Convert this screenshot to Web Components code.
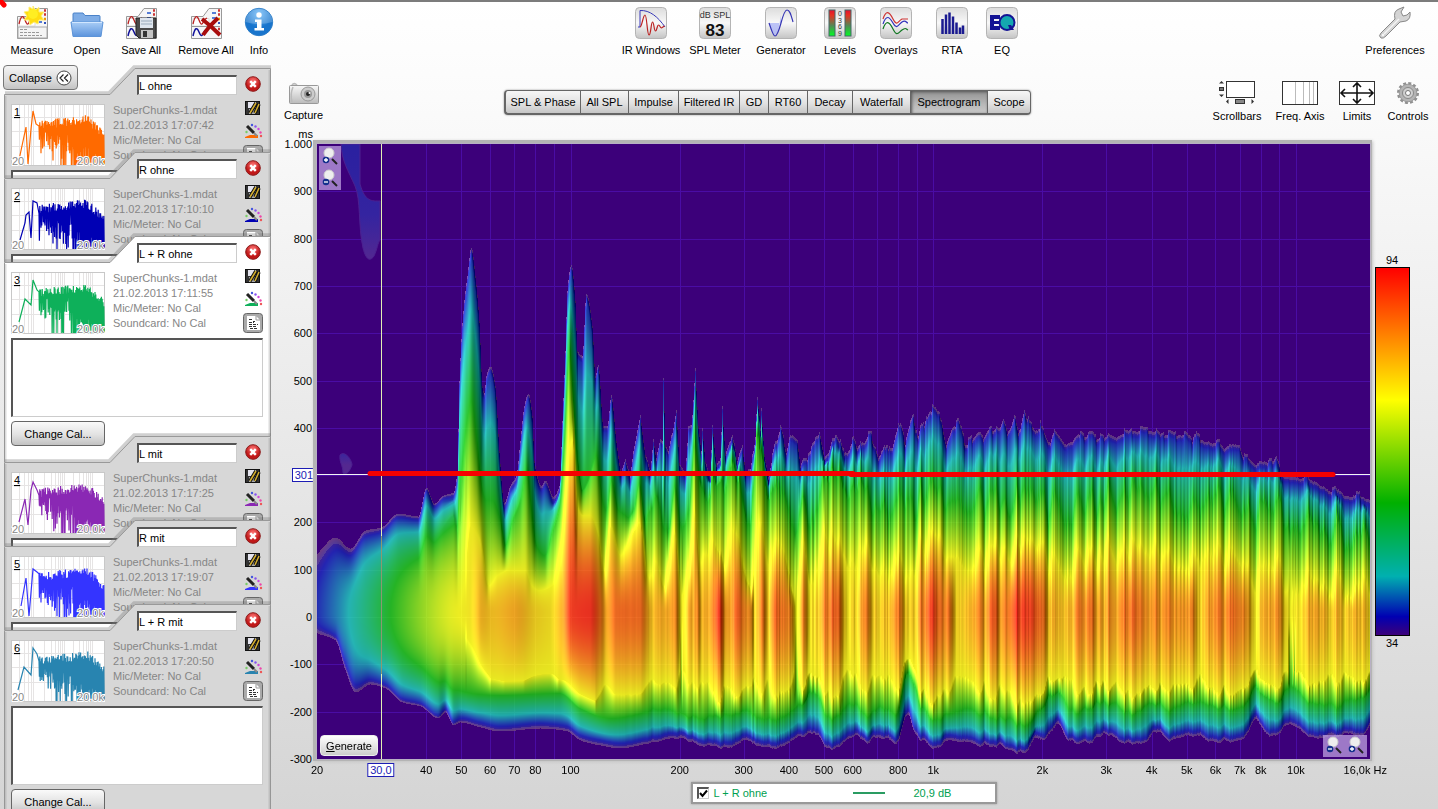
<!DOCTYPE html>
<html lang="en">
<head>
<meta charset="utf-8">
<title>Room acoustics measurement</title>
<style>
html, body { margin: 0; height: 100%; }
body { font: 11px/14px "Liberation Sans", Arial, sans-serif; color: #000; overflow: hidden; }
</style>
</head>
<body>
<acoustics-app></acoustics-app>
<script>
const define = (name, html, ready) => {
  const tpl = document.createElement('template');
  tpl.innerHTML = html;
  customElements.define(name, class extends HTMLElement {
    constructor() {
      super();
      this.attachShadow({ mode: 'open' }).appendChild(tpl.content.cloneNode(true));
    }
    connectedCallback() { if (ready && !this.done) { this.done = true; ready(this, this.shadowRoot); } }
  });
};

/* ---------- icons ---------- */
const tile = `<defs><linearGradient id="t" x2="0" y2="1"><stop stop-color="#dcdcdc"/><stop offset=".5" stop-color="#f8f8f8"/><stop offset="1" stop-color="#c4c4c4"/></linearGradient></defs><rect x=".5" y=".5" width="31" height="31" rx="4" fill="url(#t)" stroke="#b4b4b4"/>`;
const sheet = `<path d="M1.5 9.5L13 9.5 19 1.5H31.500V31.500H1.500Z" fill="#f6f6f6" stroke="#999"/><path d="M3 11.500H19V19H3Z" fill="#fff" stroke="#ddd"/><path d="M3 17C5 8 7 8 9 13S12 19 14 13L17 11" fill="none" stroke="#b22" stroke-width="1.300"/><path d="M22 6h4M22 11h4M22 15h4" stroke="#25c" stroke-width="1.500"/><path d="M28 3.500h2M28 7.500h2" stroke="#c33" stroke-width="2.500"/><path d="M28 12h2" stroke="#e90" stroke-width="2.500"/><path d="M28 16h2" stroke="#35b" stroke-width="2"/>`;
const sheet2 = sheet + `<path d="M2 19.500H30" stroke="#999"/><path d="M3 29C5 20 7 20 9 25S12 30 15 23" fill="none" stroke="#119" stroke-width="1.500"/><path d="M28 22h2M28 27h2" stroke="#c33" stroke-width="2.500"/>`;
const icons = {
  measure: sheet + `<rect x="2" y="20" width="29" height="11" fill="#f4f4f4" stroke="#aaa"/><path d="M4 22.500h8M4 25.500h20M4 28.500h22" stroke="#999" stroke-dasharray="3 1"/><path d="M17 -1l2 4 4-2.500 0 4.500 5 0-3 4 3 4-5 0-1 4-4-2-4 3-1-5-5 0 3-4-3-4 5-1 0-4 4 2z" fill="#fd1" stroke="#fe7"/><circle cx="17" cy="7" r="5" fill="#fe2"/>`,
  open: `<defs><linearGradient id="o" x2="0" y2="1"><stop stop-color="#a9cdf6"/><stop offset="1" stop-color="#5c94dc"/></linearGradient></defs><path d="M2 16V7q0-1 1-1h9l2 2.500h14q1 0 1 1V16z" fill="#7fadE6" stroke="#4a82c8"/><path d="M0 15H32L30 29.500H2Z" fill="url(#o)" stroke="#5d94d8"/><path d="M1 15.500H31" stroke="#d0e6ff"/>`,
  saveall: sheet2 + `<path d="M11 11h20v20H14l-3-3z" fill="#4a4a4a" stroke="#222"/><rect x="15" y="11" width="13" height="10" fill="#dfe6ee"/><rect x="16" y="23" width="12" height="8" fill="#c4c4c4"/><rect x="18" y="24" width="4" height="6" fill="#333"/><path d="M16 14h11M16 17h11" stroke="#9ab"/>`,
  removeall: sheet2 + `<path d="M12 12q9 7 18 16M28 11q-9 8-15 17" fill="none" stroke="#a80c0c" stroke-width="4"/>`,
  info: `<defs><radialGradient id="i" cy=".2"><stop stop-color="#6ab8f8"/><stop offset="1" stop-color="#1874cc"/></radialGradient></defs><circle cx="16" cy="15" r="13.700" fill="url(#i)" stroke="#2a7cc8"/><path d="M2.500 15Q16 19 29.500 15A13.500 13.500 0 0 0 2.500 15" fill="#fff" opacity=".22"/><circle cx="16" cy="8" r="2.700" fill="#fff"/><path d="M12 12.500h6.500v8.500h2.500v2.500H11.500V21H14v-6H12z" fill="#fff"/>`,
  ir: tile + `<path d="M3 20h2V3.500C15 3 23 10 30 20" fill="none" stroke="#3838b8"/><path d="M5 20C7 20 8 8 10 8c2 0 2 20 4 20s2-13 3.500-13 1.500 9 3 9 1.500-6 3-6 1.500 3 3 3l3-2" fill="none" stroke="#b22" stroke-width="1.200"/>`,
  spl: tile + `<text x="16" y="11" font-size="9" text-anchor="middle" fill="#333">dB SPL</text><text x="16" y="29" font-size="17" font-weight="bold" text-anchor="middle" fill="#111">83</text>`,
  gen: tile + `<path d="M4 16h12V8l-3 17-4 4-4-8z" fill="#aeb6f8" opacity=".8"/><path d="M4 16C7 24 8 29 10 29 15 29 17 3 22 3c3 0 4 5 6 12" fill="none" stroke="#3434b4" stroke-width="1.200"/>`,
  levels: `<defs><linearGradient id="l" x2="0" y2="1"><stop stop-color="#e01030"/><stop offset=".2" stop-color="#e83020"/><stop offset=".6" stop-color="#585"/><stop offset="1" stop-color="#0f2"/></linearGradient></defs>` + tile + `<rect x="5" y="3" width="6" height="26" fill="url(#l)" stroke="#466"/><rect x="21" y="3" width="6" height="26" fill="url(#l)" stroke="#466"/><g font-size="7" text-anchor="middle" fill="#333"><text x="16" y="9">0</text><text x="16" y="16">3</text><text x="16" y="22">6</text><text x="16" y="29">9</text></g>`,
  overlays: tile + `<g fill="none" stroke-width="1.200"><path d="M3 12C6 3 9 4 13 12s5 2 9 0h6" stroke="#c33"/><path d="M3 17C6 8 9 9 13 16s5 2 9-1 4 1 6 1" stroke="#33b"/><path d="M3 22C6 13 9 14 13 22s5 4 9 1 4-1 6 0" stroke="#172"/></g>`,
  rta: tile + `<path d="M7.500 27V12M11 27V7.500M14.500 27V5.500M18 27V9.500M21.500 27V15.500M25 27V20.500M28 27V18.500" transform="translate(-1)" stroke="#1a1a90" stroke-width="2.500"/>`,
  eq: tile + `<path d="M14 8H4v15h10v-4H8v-2h5v-3H8v-2h6z" fill="#141494"/><circle cx="21" cy="15.500" r="7.500" fill="#14a8b0" stroke="#141494" stroke-width="2"/><path d="M22 18h3l3 5h-4z" fill="#141494"/>`,
  wrench: `<path d="M2 31Q-1 29 2 26L16 12Q14 4 20 2L25 0 22 5 24 9 28 8 31 5Q32 12 27 14L21 15 7 29Q4 32 2 31z" fill="#d4d4d4" stroke="#888"/><path d="M5 27L20 12" stroke="#f4f4f4" stroke-width="1.500"/><circle cx="4" cy="28" r="1" fill="#fff"/>`,
  camera: `<defs><linearGradient id="c" x2="0" y2="1"><stop stop-color="#f8f8f8"/><stop offset="1" stop-color="#bbb"/></linearGradient></defs><path d="M4 3q2-3 5 0" stroke="#bbb" fill="#ddd" stroke-width="1.500"/><rect x="1.500" y="3.500" width="29" height="18" rx="1" fill="url(#c)" stroke="#999"/><path d="M5 5q-3 7-1 15" fill="none" stroke="#bbb" stroke-width="1.500"/><circle cx="20" cy="12" r="7" fill="#ccc" stroke="#999"/><circle cx="20" cy="12" r="4" fill="#999"/><circle cx="20" cy="12" r="2" fill="#222"/><circle cx="21.500" cy="11" r="1" fill="#fff"/>`,
  scrollbars: `<rect x="8.500" y=".5" width="28" height="16" fill="#fff" stroke="#333"/><path d="M1 2.500L3.500 0 6 2.500zM1 13.500L3.500 16 6 13.500z" fill="#333"/><rect x="1.500" y="6.500" width="4" height="3" fill="#777" stroke="#333"/><path d="M10.500 18L8 20.500 10.500 23zM33.500 18L36 20.500 33.500 23z" fill="#333"/><rect x="17.500" y="18.500" width="9" height="4" fill="#888" stroke="#333"/>`,
  freqaxis: `<rect x="1.500" y=".5" width="35" height="23" fill="#fff" stroke="#333"/><path d="M14.500 1v22M22.500 1v22M28.500 1v22M32.500 1v22" stroke="#bbb"/>`,
  limits: `<rect x="1.500" y=".5" width="35" height="23" fill="#fff" stroke="#333"/><path d="M3 12H35M19 2V22M7 8L3 12 7 16M31 8L35 12 31 16M15 6L19 2 23 6M15 18L19 22 23 18" fill="none" stroke="#111" stroke-width="1.600"/>`,
  gear: `<circle cx="19" cy="12" r="9.500" fill="none" stroke="#909090" stroke-width="3" stroke-dasharray="2.900 2.070"/><circle cx="19" cy="12" r="8.800" fill="#b4b4b4" stroke="#999"/><circle cx="19" cy="12" r="5.500" fill="#d0d0d0" stroke="#888"/><circle cx="19" cy="12" r="2.500" fill="#fff" stroke="#777"/>`
};

define('tool-button', `
<style>
:host { display: block; }
button { all: unset; box-sizing: border-box; width: 100%; display: flex; flex-direction: column; align-items: center; gap: 4px; white-space: nowrap; }
svg { display: block; font-family: "Liberation Sans", Arial, sans-serif; overflow: visible; }
</style>
<button type="button"><svg aria-hidden="true"></svg><span><slot></slot></span></button>`, (el, root) => {
  const svg = root.querySelector('svg'), kind = el.getAttribute('size');
  const [w, h] = kind === 'wide' ? [38, 24] : kind === 'camera' ? [32, 22] : [32, 32];
  svg.setAttribute('width', w); svg.setAttribute('height', h); svg.setAttribute('viewBox', `0 0 ${w} ${h}`);
  svg.innerHTML = icons[el.getAttribute('icon')];
});

define('main-toolbar', `
<style>
:host { display: flex; justify-content: space-between; box-sizing: border-box; height: 65px; border-top: 2px solid #7c7c7c; padding: 5px 13px 0 4px; position: relative; }
div { display: grid; align-content: start; }
.file { grid-template-columns: 56px 54px 54px 76px 30px; padding-right: 7px; }
.tools { grid-template-columns: 60px 68px 64px 54px 58px 54px 46px; }
.prefs { grid-template-columns: 60px; }
.mark { position: absolute; left: 0; top: -2px; }
</style>
<svg class="mark" width="10" height="10" aria-hidden="true"><path d="M-2 -2L4 5" stroke="red" stroke-width="5" stroke-linecap="round"/></svg>
<div class="file">
<tool-button icon="measure">Measure</tool-button><tool-button icon="open">Open</tool-button><tool-button icon="saveall">Save All</tool-button><tool-button icon="removeall">Remove All</tool-button><tool-button icon="info">Info</tool-button>
</div>
<div class="tools">
<tool-button icon="ir">IR Windows</tool-button><tool-button icon="spl">SPL Meter</tool-button><tool-button icon="gen">Generator</tool-button><tool-button icon="levels">Levels</tool-button><tool-button icon="overlays">Overlays</tool-button><tool-button icon="rta">RTA</tool-button><tool-button icon="eq">EQ</tool-button>
</div>
<div class="prefs"><tool-button icon="wrench">Preferences</tool-button></div>`);

/* ---------- helpers ---------- */
const rng = seed => () => { seed = (seed * 1664525 + 1013904223) >>> 0; return seed / 4294967296; };
const parse = s => s.trim().split(/\s+/).map(p => p.split(',').map(Number));

/* ---------- response thumbnail ---------- */
define('response-thumb', `
<style>
:host { display: block; width: 94px; height: 62px; }
svg { display: block; width: 94px; height: 62px; font: 11px "Liberation Sans", Arial, sans-serif; }
.ax { fill: #888; stroke: #fff; stroke-width: 2px; paint-order: stroke; }
.no { text-decoration: underline; }
</style><svg viewBox="0 0 94 62"></svg>`, (el, root) => {
  const n = +el.getAttribute('number'), r = rng(n * 977 + 5);
  const starts = ['8,56 15,23 17,60 20,25 22,7 25,20', '9,52 14,35 15,27 18,24 20,50 22,13 26,15', '8,50 14,27 20,33 22,8 26,18', '8,50 14,27 17,53 20,18 22,10 26,18', '10,50 15,22 18,60 22,13 26,16', '7,50 13,27 20,35 22,8 26,14'];
  let d = 'M' + starts[n - 1];
  for (let x = 28; x < 93; x += 0.8) {
    const env = x < 76 ? 21 - (x - 28) * 0.12 : 15 + (x - 76) * 0.95;
    const top = env + (r() - 0.5) * 9;
    const deep = x < 40 ? 6 + r() * 22 : x < 61 ? (r() < 0.55 ? 12 + r() * 14 : 22 + r() * 34) : (r() < 0.3 ? 32 : 50);
    d += `L${x.toFixed(1)} ${top.toFixed(1)}L${(x + 0.4).toFixed(1)} ${Math.min(61, top + deep).toFixed(1)}`;
  }
  let g = '';
  for (const x of [8, 13, 17, 20, 22, 33, 40, 44, 47, 49, 51, 53, 62, 68, 72, 75, 77, 79, 81]) g += `M${x}.5 1V61`;
  g += 'M1 13.500H93M1 27.500H93M1 42.500H93';
  root.querySelector('svg').innerHTML = `<rect x=".5" y=".5" width="93" height="61" fill="#fff" stroke="#c8c8c8"/><path d="${g}" stroke="#e6e4e4" fill="none"/><path d="${d}" fill="none" stroke="${el.getAttribute('color')}" stroke-width="1.200"/><text class="no" x="3" y="12">${n}</text><text class="ax" x="1" y="61">20</text><text class="ax" x="93" y="61" text-anchor="end">20,0k</text>`;
});

/* ---------- measurement card ---------- */
define('measurement-card', `
<style>
:host { display: block; position: relative; height: 84px; --fill: #d7d7d7; }
:host([open]) { height: 200px; }
:host([selected]) { --fill: #fff; }
.shape { position: absolute; left: 0; top: -4px; }
.inner { position: relative; box-sizing: border-box; height: 110px; overflow: hidden; padding: 7px 0 0 7px; width: 267px; display: grid; grid-template-columns: 94px 123px 22px; grid-template-rows: 20px 9px 66px 83px 25px; column-gap: 7px; align-items: start; }
:host([open]) .inner { height: 226px; }
input { grid-area: 1 / 2; margin: 0 0 0 25px; box-sizing: border-box; width: 100px; height: 20px; font: inherit; border: solid; border-width: 2px 1px 1px 2px; border-color: #555 #ccc #ccc #555; padding: 1px 0; background: #fff; color: #000; border-radius: 0; outline: none; }
response-thumb { grid-area: 3 / 1; }
dl { grid-area: 3 / 2; margin: 0; padding-left: 1px; line-height: 15px; color: #868686; white-space: nowrap; margin-top: -1px; }
dd { margin: 0; }
.acts { grid-area: 1 / 3 / 4; display: flex; flex-direction: column; align-items: center; gap: 7px; }
.acts button { all: unset; display: block; width: 20px; height: 17px; }
.acts button.notes { height: 20px; margin-top: -2px; }
.acts svg { display: block; margin: auto; overflow: visible; }
textarea { grid-area: 4 / 1 / 5 / 4; box-sizing: border-box; width: 252px; height: 79px; resize: none; margin: 0; border: solid; border-width: 2px 1px 1px 2px; border-color: #555 #ccc #ccc #555; border-radius: 0; background: #fff; outline: none; overflow: hidden; }
.cal { grid-area: 5 / 1; box-sizing: border-box; height: 25px; width: 94px; font: inherit; color: #000; border: 1px solid #666; border-radius: 4px; background: linear-gradient(#fafafa, #e2e2e2 55%, #c2c2c2); padding: 0; }
</style>
<svg class="shape" width="268" height="240" aria-hidden="true"></svg>
<div class="inner">
<input type="text" aria-label="Measurement name">
<dl><dd class="f">SuperChunks-1.mdat</dd><dd class="d"></dd><dd>Mic/Meter: No Cal</dd><dd>Soundcard: No Cal</dd></dl>
<div class="acts">
<button type="button" aria-label="Remove"><svg width="16" height="17"><defs><radialGradient id="r" cy=".3"><stop stop-color="#f77"/><stop offset="1" stop-color="#c01818"/></radialGradient></defs><circle cx="8" cy="9" r="7.300" fill="url(#r)" stroke="#8c1c1c"/><path d="M5.200 6.200L10.800 11.800M10.800 6.200L5.200 11.800" stroke="#fff" stroke-width="2.400"/></svg></button>
<button type="button" aria-label="Save"><svg width="16" height="17"><rect x=".5" y="2.500" width="14" height="13" fill="#333" stroke="#111"/><rect x="3" y="3" width="8" height="6" fill="#e4e4ee"/><rect x="4" y="10" width="6" height="5" fill="#aaa"/><path d="M5 14L11 4M10 14L14 5" stroke="#111" stroke-width="3.500"/><path d="M5 14L11 4M10 14L14 5" stroke="#d6b030" stroke-width="1.500"/></svg></button>
<button type="button" aria-label="Trace colour"><svg width="17" height="17"><path class="tr" d="M0 14L5 12H13V15H0z"/><path d="M2 3L9 10" stroke="#222" stroke-width="3"/><path d="M9 10l3 3" stroke="#888" stroke-width="2"/><g><circle cx="7" cy="2" r="1.200" fill="#45d"/><circle cx="10.500" cy="3.500" r="1.200" fill="#85e"/><circle cx="13.500" cy="6" r="1.200" fill="#c4d"/><circle cx="15.500" cy="9.500" r="1.200" fill="#e4a"/><circle cx="16" cy="13" r="1.200" fill="#e55"/><circle cx="1.500" cy="9" r="1.200" fill="#7c6"/></g></svg></button>
<button type="button" class="notes" aria-label="Notes"><svg width="20" height="20"><rect x=".5" y=".5" width="19" height="19" rx="3" fill="#aaa" stroke="#666"/><path d="M4 3h9l4 4v10H4z" fill="#fff"/><path d="M13 3v4h4" fill="none" stroke="#999"/><path d="M6 6.500h3M10 8.500h2M6 9.500h5M6 11.500h9M6 13.500h8M7 15.500h8" stroke="#333" stroke-dasharray="3 1"/></svg></button>
</div>
<textarea aria-label="Notes" readonly></textarea>
<button type="button" class="cal">Change Cal...</button>
</div>`, (el, root) => {
  const open = el.hasAttribute('open'), b = open ? 230 : 114;
  root.querySelector('.shape').innerHTML = `<path d="M.5 ${b}V30.500H106L131 4.500H266.500V${b}z" style="fill:var(--fill)"/><path d="M1 29H105L130 3H267" fill="none" stroke="#777" stroke-opacity=".35" stroke-width="3.500"/><path d="M.5 ${b}V30.500H106L131 4.500H266.500V${b}" fill="none" stroke="#999"/><path d="M1.500 ${b}V32M265.500 6V${b}" stroke="#888" stroke-opacity=".3" stroke-width="2"/>`;
  root.querySelector('input').value = el.getAttribute('name');
  root.querySelector('.d').textContent = el.getAttribute('date');
  root.querySelector('.tr').setAttribute('fill', el.getAttribute('color'));
  const t = document.createElement('response-thumb');
  t.setAttribute('number', el.getAttribute('number'));
  t.setAttribute('color', el.getAttribute('color'));
  root.querySelector('input').after(t);
});

define('measurement-list', `
<style>
:host { display: block; box-sizing: border-box; overflow: hidden; padding-left: 3px; min-height: 0; }
.collapse { position: relative; z-index: 1; display: flex; align-items: center; justify-content: space-between; box-sizing: border-box; width: 75px; height: 25px; margin: 0 0 -22px; padding: 0 5px; font: inherit; color: #000; border: 1px solid #777; border-radius: 4px; background: linear-gradient(#f4f4f4, #dcdcdc 60%, #c4c4c4); }
.cards { padding-left: 1px; }
</style>
<button type="button" class="collapse">Collapse <svg width="16" height="16" aria-hidden="true"><circle cx="8" cy="8" r="7" fill="#fff" stroke="#444"/><path d="M7.500 4.500L4 8 7.500 11.500M12 4.500L8.500 8 12 11.500" fill="none" stroke="#222" stroke-width="1.200"/></svg></button>
<div class="cards">
<measurement-card number="1" name="L ohne" date="21.02.2013 17:07:42" color="#ff6a00"></measurement-card>
<measurement-card number="2" name="R ohne" date="21.02.2013 17:10:10" color="#0000b4"></measurement-card>
<measurement-card number="3" name="L + R ohne" date="21.02.2013 17:11:55" color="#0eb05a" open selected></measurement-card>
<measurement-card number="4" name="L mit" date="21.02.2013 17:17:25" color="#8a28b4"></measurement-card>
<measurement-card number="5" name="R mit" date="21.02.2013 17:19:07" color="#3434ff"></measurement-card>
<measurement-card number="6" name="L + R mit" date="21.02.2013 17:20:50" color="#2884b0" open></measurement-card>
</div>`);

/* ---------- graph tabs ---------- */
define('graph-tabs', `
<style>
:host { display: block; }
nav { display: grid; grid-template-columns: 76px 48px 50px 61px 29px 39px 45px 58px 77px 44px; box-sizing: border-box; height: 25px; border-radius: 4px; box-shadow: 0 0 2px #888; }
button { box-sizing: border-box; margin: 0; padding: 0; font: inherit; color: #000; white-space: nowrap; border: solid #666; border-width: 1px 0 2px 1px; background: linear-gradient(#f6f6f6, #e2e2e2 55%, #c6c6c6); }
button:first-child { border-radius: 4px 0 0 4px; border-left-width: 2px; }
button:last-child { border-radius: 0 4px 4px 0; border-right-width: 1px; }
button[aria-pressed=true] { background: linear-gradient(#929292, #b8b8b8 60%, #c8c8c8); box-shadow: inset 1px 1px 3px #555; }
</style>
<nav aria-label="Graph type"></nav>`, (el, root) => {
  for (const t of ['SPL & Phase', 'All SPL', 'Impulse', 'Filtered IR', 'GD', 'RT60', 'Decay', 'Waterfall', 'Spectrogram', 'Scope']) {
    const b = document.createElement('button');
    b.type = 'button'; b.textContent = t; b.setAttribute('aria-pressed', t === 'Spectrogram');
    root.querySelector('nav').append(b);
  }
});

define('graph-toolbar', `
<style>
:host { display: flex; justify-content: space-between; align-items: start; height: 79px; box-sizing: border-box; padding: 0 1px 0 13px; }
.capture { width: 39px; margin: 17px 3px 0 0; }
graph-tabs { margin-top: 25px; }
.opts { display: grid; grid-template-columns: 56px 70px 44px 58px; margin-top: 16px; }
</style>
<tool-button class="capture" icon="camera" size="camera">Capture</tool-button>
<graph-tabs></graph-tabs>
<div class="opts"><tool-button icon="scrollbars" size="wide">Scrollbars</tool-button><tool-button icon="freqaxis" size="wide">Freq. Axis</tool-button><tool-button icon="limits" size="wide">Limits</tool-button><tool-button icon="gear" size="wide">Controls</tool-button></div>`);

/* ---------- spectrogram ---------- */
const W = 1053, H = 615, X0 = 317, Y0 = 144;
const freqX = f => Math.log(f / 20) / Math.log(800);
const stops = [[0, 60, 0, 122], [.04, 0, 0, 178], [.163, 0, 176, 176], [.36, 0, 176, 0], [.64, 255, 255, 0], [1, 255, 0, 0]];
const colour = v => {
  v = Math.max(0, Math.min(1, v));
  let i = 1; while (v > stops[i][0]) i++;
  const a = stops[i - 1], b = stops[i], t = (v - a[0]) / (b[0] - a[0]);
  return [1, 2, 3].map(k => a[k] + (b[k] - a[k]) * t);
};
const ramp = (x, a, b) => { const t = Math.max(0, Math.min(1, (x - a) / (b - a))); return t * t * (3 - 2 * t); };
/* Monotone cubic curve through the points, sampled once per column. */
const curve = (text, linearFrom = 9999) => {
  const p = parse(text), n = p.length, s = [], m = [];
  for (let i = 0; i < n - 1; i++) s.push((p[i + 1][1] - p[i][1]) / (p[i + 1][0] - p[i][0]));
  for (let i = 0; i < n; i++) m.push(i === 0 ? s[0] : i === n - 1 ? s[n - 2] : s[i - 1] * s[i] <= 0 ? 0 : 2 * s[i - 1] * s[i] / (s[i - 1] + s[i]));
  const out = new Float32Array(W + 2); let j = 0;
  for (let c = 0; c < W + 2; c++) {
    const x = X0 + c - 1;
    while (j < n - 2 && x > p[j + 1][0]) j++;
    const h = p[j + 1][0] - p[j][0], t = Math.max(0, Math.min(1, (x - p[j][0]) / h)), a = p[j][1], b = p[j + 1][1];
    out[c] = x > linearFrom ? a + (b - a) * t : (1 + 2 * t) * (1 - t) ** 2 * a + t * (1 - t) ** 2 * h * m[j] + t * t * (3 - 2 * t) * b + t * t * (t - 1) * h * m[j + 1];
  }
  return out;
};
const drawSpectrogram = cv => {
  const T0 = curve(`317,553 335,537 350,548 365,530 381,527 398,513 418,516 426,487 434,503 443,495 453,492 457,470 459,380 463,310 467,275 471,247 475,275 479,320 482,385 484,392 486,375 490,366 495,385 499,450 504,502 510,485 516,475 520,440 524,405 528,393 532,415 534,460 541,485 545,480 553,496 559,485 562,420 565,350 567,290 571,264 575,300 577,350 582,355 586,293 592,325 595,375 598,364 603,425 607,425 611,395 616,440 621,470 625,458 630,475 633,450 640,413 645,455 650,470 653,438 656,460 660,440 662,440 663,376 665,445 668,450 676,410 679,460 685,470 688,430 691,425 695,365 698,425 701,450 702,428 705,460 710,470 712,421 716,460 720,460 722,406 725,455 732,441 737,460 742,440 745,465 750,465 755,440 757,405 760,430 761,411 764,455 768,475 780,427 786,450 790,430 797,432 800,460 810,455 820,431 824,460 830,445 836,433 842,450 847,445 852,440 858,445 866,440 871,432 878,455 887,440 892,440 898,420 905,440 913,412 918,440 926,412 934,412 941,420 946,440 952,425 958,422 965,440 975,432 985,435 995,430 1003,416 1008,430 1014,417 1018,430 1024,409 1030,425 1040,427 1050,440 1054,430 1065,440 1080,433 1100,435 1125,432 1149,428 1160,434 1185,430 1192,440 1194,432 1205,440 1225,445 1239,442 1243,455 1255,460 1268,462 1275,457 1280,471 1300,475 1315,480 1330,487 1350,492 1360,493 1365,498 1370,496`, 620);
  const Tg = curve(`317,612 388,600 400,568 420,545 440,530 453,515 457,535 460,520 466,440 471,410 476,440 482,490 486,500 492,500 500,520 505,545 512,520 520,500 526,470 530,500 536,545 545,555 552,530 560,500 564,440 569,350 573,400 577,460 582,490 588,480 596,455 602,500 606,510 611,480 618,510 628,515 633,510 639,480 645,520 655,500 663,525 668,525 674,485 680,520 688,520 694,430 699,480 705,500 712,470 722,490 732,470 742,490 750,520 757,450 762,470 768,500 780,490 795,520 800,500 812,530 822,480 840,480 860,490 880,510 898,490 910,510 925,490 950,500 1000,500 1030,490 1050,510 1100,500 1150,495 1200,505 1230,505 1250,515 1280,515 1300,525 1340,530 1370,538`);
  const Ty = curve(`317,612 450,600 463,575 470,525 480,540 488,585 497,575 510,570 525,570 531,585 540,590 552,585 560,550 564,510 568,450 573,440 577,505 583,515 590,515 598,535 604,570 610,525 620,555 633,530 640,520 648,580 655,565 663,585 674,530 681,590 688,575 694,505 700,565 713,535 722,565 734,535 745,565 751,585 760,535 767,565 780,545 795,590 802,545 812,590 822,545 840,545 858,565 866,550 880,575 897,550 909,585 920,545 935,540 950,555 970,560 1000,550 1030,540 1045,555 1055,570 1080,558 1130,552 1190,558 1240,562 1255,580 1275,570 1292,588 1320,582 1340,582 1370,588`);
  const P = curve(`317,.05 345,.15 388,.35 450,.62 470,.67 480,.75 490,.73 515,.77 535,.7 550,.68 561,.78 570,.95 590,.97 600,.86 605,.78 615,.87 640,.88 650,.74 660,.76 668,.79 675,.82 681,.67 690,.78 697,.83 701,.74 712,.86 718,.95 725,.8 730,.78 736,.88 750,.82 754,.68 762,.82 767,.72 775,.86 790,.83 796,.67 802,.82 811,.66 822,.8 837,.87 845,.72 855,.7 865,.82 874,.72 880,.7 897,.86 909,.67 920,.83 932,.92 940,.84 948,.87 956,.7 970,.79 985,.82 992,.88 1000,.82 1015,.95 1030,.94 1042,.84 1055,.72 1070,.8 1088,.84 1105,.78 1130,.85 1150,.8 1190,.84 1198,.72 1210,.79 1240,.84 1254,.7 1275,.78 1292,.67 1300,.7 1318,.77 1340,.73 1350,.77 1370,.69`);
  const B0 = curve(`317,633 335,640 345,670 355,692 370,684 385,688 402,702 420,706 438,718 445,712 453,725 460,722 480,727 500,731 540,728 555,729 567,731 580,740 600,745 620,748 640,745 655,741 680,738 700,745 725,747 745,741 775,747 800,737 812,732 830,748 845,742 857,735 868,742 875,737 885,738 895,745 908,713 915,735 922,740 935,747 950,740 962,742 985,745 1000,745 1010,752 1025,752 1035,738 1045,738 1057,722 1068,742 1087,742 1108,733 1120,742 1145,742 1155,730 1170,740 1197,735 1210,740 1240,740 1256,720 1270,735 1290,725 1305,733 1320,738 1340,735 1360,735 1370,725`);
  const Bg = curve(`317,612 388,615 400,650 420,672 440,685 470,693 500,695 560,693 580,708 610,718 640,714 655,708 700,718 745,712 775,718 800,706 812,690 830,717 855,704 868,715 880,706 895,717 908,670 920,705 935,718 962,710 1000,718 1025,725 1040,708 1057,690 1070,712 1108,702 1130,712 1155,702 1170,710 1197,702 1240,708 1256,688 1275,700 1292,688 1305,698 1330,706 1355,700 1370,690`);
  const r = rng(41), n1 = [], n2 = [], nt = [];
  for (let i = 0; i < W + 4; i++) { n1.push(r() - .5); n2.push(r() - .5); nt.push(r()); }
  const V = new Float32Array((W + 2) * H);
  for (let c = 0; c < W + 2; c++) {
    const x = X0 + c - 1;
    const a = Math.max(0, Math.min(1, (x - 610) / 150));
    const k = Math.floor(c / 4), f = (c % 4) / 4;
    const slow = n1[k] * (1 - f) + n1[k + 1] * f;
    const noise = (slow * .9 + n2[c] * .22) * a;
    const peak = P[c] + noise * .1, mid = 612, calm = ramp(x, 1300, 1020);
    const jag = x > 1040 ? .5 : 1;
    const top = T0[c] - noise * 12 * jag + (nt[k] > .75 ? -4 * a * jag : 2 * a);
    const tg = Math.max(top + 22, Tg[c] - noise * 40), ty = Math.min(598, Math.max(tg + 18, Ty[c] - noise * 34));
    const bot = B0[c] + noise * 5, bg = Bg[c] + noise * 8;
    const by = x < 450 ? mid : Math.min(bg - 14, Math.min(1, (x - 450) / 40) * (68 + (P[c] - .78) * 110 + noise * 18) + 616);
    const up = [[top, 0], [top + 7, .05], [top + (tg - top) * .42, .163], [tg, .36], [ty, .64]];
    const dn = [[bot, 0], [bot - 6, .05], [bot - (bot - bg) * .45, .163], [bg, .36], [by, .64]];
    const byKnots = (side, list) => {
      let prev = list[0];
      for (let i = 1; i < list.length; i++) {
        if (list[i][1] >= peak - .015) break;
        const nx = list[i];
        if (side > Math.abs(nx[0] - mid)) return prev[1] + (nx[1] - prev[1]) * (Math.abs(prev[0] - mid) - side) / Math.abs(prev[0] - nx[0]);
        prev = nx;
      }
      const t = side / Math.max(1, Math.abs(prev[0] - mid));
      return peak - (peak - prev[1]) * Math.pow(t, 1.7);
    };
    const w = ramp(x, 425, 485);
    const fall = (y, list) => {
      const side = Math.abs(y - mid), reach = Math.abs(list[0][0] - mid);
      if (side >= reach) return -1;
      const dome = w < 1 ? P[c] * (1 - Math.pow(side / reach, 2.300)) : 0;
      return dome * (1 - w) + (w > 0 ? byKnots(side, list) * w : 0);
    };
    for (let j = 0; j < H; j++) { const y = Y0 + j; V[j * (W + 2) + c] = y < mid ? fall(y, up) : fall(y, dn); }
  }
  const cols = new Set([40, 50, 60, 70, 80, 90, 100, 200, 300, 400, 500, 600, 700, 800, 900, 1000, 2000, 3000, 4000, 5000, 6000, 7000, 8000, 9000, 10000].map(f => Math.round(freqX(f) * W)));
  const rows = new Set([1, 2, 3, 4, 5, 6, 7, 8, 9, 10, 11, 12].map(i => Math.round(i * H / 13)));
  const ctx = cv.getContext('2d'), im = ctx.createImageData(W, H);
  for (let j = 0; j < H; j++) for (let i = 0; i < W; i++) {
    const q = j * (W + 2) + i + 1, v = V[q], o = (j * W + i) * 4, line = cols.has(i) || rows.has(j);
    im.data[o + 3] = 255;
    if (v < 0) { im.data[o] = line ? 74 : 60; im.data[o + 1] = line ? 12 : 0; im.data[o + 2] = line ? 165 : 122; continue; }
    const l = Math.max(-.2, Math.min(.14, (Math.max(0, V[q + 1]) - Math.max(0, V[q - 1])) * 3));
    const col = colour(v), edge = v < .02 ? 25 : 0;
    for (let k = 0; k < 3; k++) im.data[o + k] = col[k] * (.78 + l) + 32 + Math.max(0, l) * 190 + Math.min(0, l) * 160 + (k < 2 ? edge : 0) + (line ? 5 : 0);
  }
  ctx.putImageData(im, 0, 0);
  ctx.translate(-X0, -Y0);
  const blob = (d, y1, y2) => {
    const g = ctx.createLinearGradient(0, y1, 0, y2);
    g.addColorStop(0, '#2a20a0'); g.addColorStop(.6, '#3424a0'); g.addColorStop(1, '#542890');
    ctx.fillStyle = g; ctx.strokeStyle = '#4c2090'; const p = new Path2D(d); ctx.fill(p); ctx.stroke(p);
  };
  blob('M341 144C342 162 348 170 355 186C361 200 358 225 363 248C366 260 370 262 374 256C377 250 378 242 380 240V201C372 201 365 202 360 184V144Z', 144, 262);
  blob('M340 455C345 450 352 460 352 465C350 471 346 476 343 473C343 465 339 462 340 455Z', 430, 465);
};

const glass = (x, y, sign) => `<g transform="translate(${x} ${y})"><path d="M11 12L16 17" stroke="#222" stroke-width="2"/><circle cx="8" cy="6" r="5" fill="#eee" stroke="#ccc"/><circle cx="5" cy="13" r="3.300" fill="#14308c"/><path d="M3 13h4${sign ? 'M5 11v4' : ''}" stroke="#fff" stroke-width="1.300"/></g>`;

define('spectrogram-plot', `
<style>
:host { display: grid; grid-template-columns: 46px 1fr; grid-template-rows: 1fr 20px; min-height: 0; }
.y, .x, .plot { position: relative; }
.y span { position: absolute; right: 5px; transform: translateY(-50%); }
.x span { position: absolute; top: 4px; transform: translateX(-50%); white-space: nowrap; }
.x .last { transform: none; right: -17px; }
.y .unit { right: 4px; top: -10px; }
.y .box, .x .box { box-sizing: border-box; border: 1px solid #1c1cb4; color: #1c1cb4; background: #fff; line-height: 12px; }
.y .box { padding: 0 2px; right: 1px; }
.x .box { padding: 0 2px; }
.plot { box-shadow: 0 0 0 1px #b8b0c4, -1px -1px 0 3px #b4b4b4, 0 0 3px 3px #c4c4c4; }
canvas, .over { position: absolute; inset: 0; width: 100%; height: 100%; display: block; }
.zoom { position: absolute; background: rgba(190,160,225,.75); display: grid; }
.zy { left: 2px; top: 2px; }
.zx { right: 3px; bottom: 2px; grid-auto-flow: column; }
.zoom button { all: unset; display: block; width: 22px; height: 22px; }
.zoom svg { display: block; }
.gen { position: absolute; left: 3px; bottom: 3px; width: 58px; height: 21px; padding: 0; font: inherit; color: #000; border: 1px solid #eee; border-radius: 4px; background: linear-gradient(#fff, #ddd 70%, #ccc); }
</style>
<div class="y"></div>
<div class="plot"><canvas width="1053" height="615" role="img" aria-label="Spectrogram of L + R ohne"></canvas>
<svg class="over" viewBox="0 0 1053 615" preserveAspectRatio="none" aria-hidden="true"><path d="M64.500 0V615" stroke="#e2efb4"/><path d="M64.500 392V530" stroke="#8c9870"/><path d="M0 330.500H1053" stroke="#f4f4f4"/><path d="M53 329.500H536" stroke="#f60000" stroke-width="5" stroke-linecap="round"/><path d="M534 330.500H1016" stroke="#f60000" stroke-width="5" stroke-linecap="round"/></svg>
<div class="zoom zy"><button type="button" aria-label="Zoom in time"><svg width="22" height="22">${glass(2, 1, 1)}</svg></button><button type="button" aria-label="Zoom out time"><svg width="22" height="22">${glass(2, 1, 0)}</svg></button></div>
<div class="zoom zx"><button type="button" aria-label="Zoom out frequency"><svg width="22" height="22">${glass(2, 1, 0)}</svg></button><button type="button" aria-label="Zoom in frequency"><svg width="22" height="22">${glass(2, 1, 1)}</svg></button></div>
<button type="button" class="gen"><u>G</u>enerate</button></div>
<div></div><div class="x"></div>`, (el, root) => {
  drawSpectrogram(root.querySelector('canvas'));
  const y = root.querySelector('.y'), x = root.querySelector('.x');
  let s = '<span class="unit">ms</span>';
  for (let v = 1000; v >= -300; v -= 100) if (v !== 300) s += `<span style="top:${(1000 - v) / 13}%">${v === 1000 ? '1.000' : v}</span>`;
  y.innerHTML = s + `<span class="box" style="top:${(1000 - 301) / 13}%">301</span>`;
  const names = { 20: '20', 40: '40', 50: '50', 60: '60', 70: '70', 80: '80', 100: '100', 200: '200', 300: '300', 400: '400', 500: '500', 600: '600', 800: '800', 1000: '1k', 2000: '2k', 3000: '3k', 4000: '4k', 5000: '5k', 6000: '6k', 7000: '7k', 8000: '8k', 10000: '10k' };
  x.innerHTML = Object.entries(names).map(([f, t]) => `<span style="left:${freqX(+f) * 100}%">${t}</span>`).join('') + `<span class="box" style="left:${freqX(30) * 100}%">30,0</span><span class="last">16,0k Hz</span>`;
});

define('level-scale', `
<style>
:host { display: flex; flex-direction: column; justify-content: center; align-items: center; width: 34px; margin-left: 5px; gap: 0; text-align: center; min-height: 0; }
.bar { box-sizing: border-box; width: 35px; height: 60%; border: 1px solid #000; background: linear-gradient(to top, #3c007a, #0000b2 5%, #00b0b0 16%, #00b000 36%, #ff0 64%, #f00); }
</style><span>94</span><div class="bar"></div><span>34</span>`);

define('trace-legend', `
<style>
:host { display: block; box-sizing: border-box; width: 306px; height: 22px; border: 2px solid #999; background: #fff; box-shadow: 0 0 2px #999; color: #00a050; }
label { display: grid; grid-template-columns: 17px 139px 61px 1fr; align-items: center; height: 18px; padding-left: 4px; }
input { appearance: none; box-sizing: border-box; width: 12px; height: 12px; margin: 0; border: solid; border-width: 2px 1px 1px 2px; border-color: #555 #ccc #ccc #555; background: #fff url('data:image/svg+xml,<svg xmlns="http://www.w3.org/2000/svg" viewBox="0 0 9 9"><path d="M1 4L3.500 7 8 1.500" fill="none" stroke="black" stroke-width="2"/></svg>'); }
i { display: block; width: 32px; height: 2px; background: #2a9c62; }
</style>
<label><input type="checkbox" checked><span>L + R ohne</span><i></i><span>20,9 dB</span></label>`);

define('acoustics-app', `
<style>
:host { display: grid; grid-template-columns: 271px 1fr; grid-template-rows: 65px 1fr; height: 100vh; background: linear-gradient(#fff, #fbfbfb 12%, #d5d5d5); }
main-toolbar { grid-column: 1 / 3; }
main { display: grid; grid-template-columns: 1fr 68px; grid-template-rows: 79px 1fr 50px; min-height: 0; min-width: 0; }
graph-toolbar { grid-column: 1 / 3; }
spectrogram-plot { margin-bottom: -20px; }
trace-legend { justify-self: center; margin: 23px 0 0 46px; }
</style>
<main-toolbar></main-toolbar>
<measurement-list></measurement-list>
<main><graph-toolbar></graph-toolbar><spectrogram-plot></spectrogram-plot><level-scale></level-scale><trace-legend></trace-legend></main>`);
</script>
</body>
</html>
